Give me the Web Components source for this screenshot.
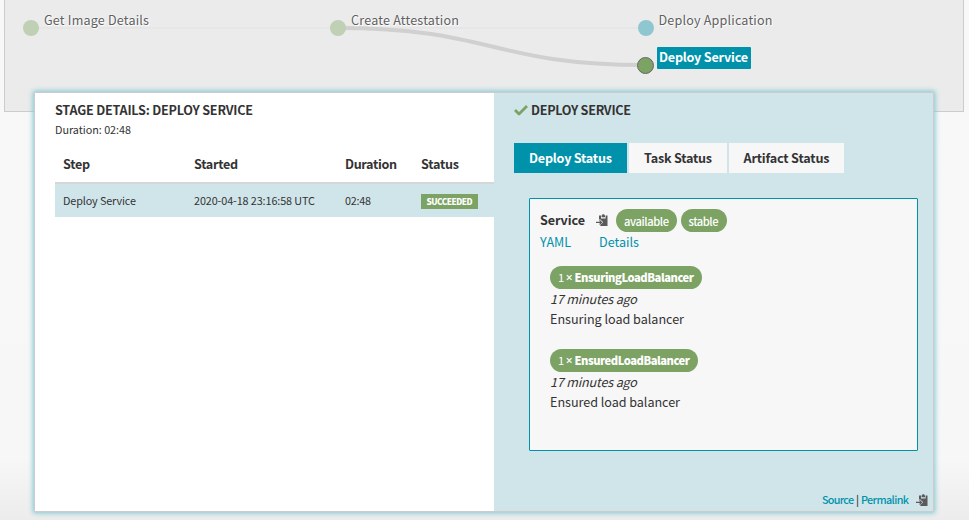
<!DOCTYPE html>
<html lang="en">
<head>
<meta charset="utf-8">
<title>Pipeline execution</title>
<style>
html{height:100%}
body{margin:0;height:520px;overflow:hidden;background:linear-gradient(#f8f8f8 0,#f7f7f7 460px,#ececec 520px);font-family:"Noto Sans CJK SC","Noto Sans",sans-serif;font-size:12.6px;line-height:20px;color:#333}
</style>
</head>
<body>
<execution-view></execution-view>
<script>
const define = (name, html, setup) => {
  const t = document.createElement('template');
  t.innerHTML = html;
  customElements.define(name, class extends HTMLElement {
    constructor() {
      super();
      this.attachShadow({mode: 'open'}).append(t.content.cloneNode(true));
    }
    connectedCallback() { if (setup) setup(this, this.shadowRoot); }
  });
};

/* A single line of text tracked to a given width. */
define('fit-text', `<style>:host{display:inline-block;white-space:nowrap;flex:none}span{display:inline-block}</style><span><slot></slot></span>`, (el, root) => {
  const w = +el.getAttribute('w'), span = root.querySelector('span');
  el.style.width = w + 'px';
  requestAnimationFrame(() => {
    const natural = span.getBoundingClientRect().width;
    span.style.letterSpacing = (w - natural) / Math.max(1, el.textContent.length - 1) + 'px';
  });
});

define('clip-icon', `<style>:host{display:inline-block;width:12px;height:13px;flex:none}svg{display:block}</style>
<svg width="12" height="13" viewBox="0 0 12 13"><path fill="#5a5a5a" d="M3 1.6H5V4.4H9.6V1.6H11.5V12H4.3V10.8L7.2 8.3 4.3 5.6H3Z"/><path fill="#5a5a5a" d="M5.6 1.2H6.3V.3H8.3V1.2H9V3.3H5.6Z"/><path fill="none" stroke="#5a5a5a" stroke-width="1.1" d="M0 8.4H5.3M3.5 6.4 5.6 8.4 3.5 10.4"/></svg>`);

define('check-icon', `<style>:host{display:inline-block;width:14px;height:12px;flex:none}svg{display:block}</style>
<svg width="14" height="12" viewBox="0 0 14 12"><path fill="none" stroke="#7ba363" stroke-width="2.8" stroke-linejoin="round" d="M1 6 5 10 13 2"/></svg>`);

define('status-pill', `<style>:host{display:inline-flex;box-sizing:border-box;height:23px;border-radius:11.5px;background:#7da364;color:#fff;font-size:11.2px;font-weight:500;line-height:23px;padding:0 8px;white-space:pre;align-items:center}</style><slot></slot>`);

define('tab-item', `<style>:host{display:flex;box-sizing:border-box;height:30px;justify-content:center;align-items:center;background:#f7f7f7;color:#333;font-weight:700}:host([active]){background:#0092ab;color:#fff}</style><slot></slot>`);

define('stage-node', `<style>
:host{position:absolute;display:block;width:16px;height:16px}
i{display:block;box-sizing:border-box;width:16px;height:16px;border-radius:50%;background:var(--fill)}
div{position:absolute;left:21px;top:-10px;height:20px;color:#606060;text-shadow:0 0 2px #fff,1px 1px 1px #fff}
:host([active]) i{width:17px;height:17px;border:1px solid #666}
:host([active]) div{left:19.5px;top:-9.5px;height:22px;box-sizing:border-box;padding:0 3px 0 2.5px;background:#0092ab;color:#fff;border-radius:1px;font-weight:700;text-shadow:none}
</style><i></i><div><slot></slot></div>`);

define('stage-graph', `<style>
:host{display:block;position:relative;box-sizing:border-box;width:960px;height:112px;margin-left:4px;background:#ebebeb;border:1px solid #ccc;border-top:0}
svg{position:absolute;left:-1px;top:0}
</style>
<svg width="959" height="111" viewBox="4 0 959 111" fill="none"><path d="M31 28H645" stroke="#e4e4e4" stroke-width="1.5"/><path d="M338 28C492 28 492 65 645 65" stroke="#d0d0d0" stroke-width="4"/></svg>
<stage-node style="left:18px;top:20px;--fill:#bfd0b5"><fit-text w="105">Get Image Details</fit-text></stage-node>
<stage-node style="left:325px;top:20px;--fill:#bfd0b5"><fit-text w="108">Create Attestation</fit-text></stage-node>
<stage-node style="left:632.5px;top:20px;--fill:#8fc7d1"><fit-text w="114">Deploy Application</fit-text></stage-node>
<stage-node active style="left:632px;top:56.5px;--fill:#7ba363"><fit-text w="89">Deploy Service</fit-text></stage-node>`);

define('step-table', `<style>
:host{display:block;margin-top:5px}
.row{display:grid;grid-template-columns:131px 151px 76px 1fr;padding-left:8px;align-items:center}
.head{height:37px;border-bottom:2px solid #d5d7d7;font-weight:700;color:#333}
.body{height:33px;line-height:18px;background:#d0e5ea;font-size:10.8px}
.tag{display:flex;justify-content:center;width:57px;height:15px;line-height:15px;margin-top:2px;background:#7da364;color:#fff;font-size:8.3px;font-weight:900}
.body>fit-text{margin-bottom:1px}
</style>
<div class="row head"><fit-text w="27">Step</fit-text><fit-text w="44">Started</fit-text><fit-text w="52">Duration</fit-text><fit-text w="38">Status</fit-text></div>
<div class="row body"><fit-text w="73">Deploy Service</fit-text><fit-text w="121">2020-04-18 23:16:58 UTC</fit-text><fit-text w="26">02:48</fit-text><span class="tag"><fit-text w="46">SUCCEEDED</fit-text></span></div>`);

define('event-item', `<style>:host{display:flex;flex-direction:column;align-items:flex-start}.ago{font-style:italic}</style>
<slot name="pill"></slot><div class="ago"><fit-text w="87">17 minutes ago</fit-text></div><slot></slot>`);

define('service-card', `<style>
:host{display:block;box-sizing:border-box;width:389px;height:253px;margin:25px 0 0 15px;border:1px solid #0092ab;border-radius:1px;background:#f7f7f7;padding:10px}
.top{display:flex;height:23px;align-items:center}
.top b{margin-bottom:2px}
.top clip-icon{margin:0 8px 0 11px}
.top status-pill{margin-right:4px;line-height:24px}
.links{display:flex;gap:28px;height:20px;color:#0092ab}
.events{display:flex;flex-direction:column;gap:20px;padding:14px 0 0 10px}
.events b{font-weight:900;margin-left:2.5px}
.count{display:inline-flex;gap:1.5px;width:14px;font-weight:400}
.count span{font-family:"Noto Sans",sans-serif;font-weight:500;font-size:12px}
</style>
<div class="top"><b><fit-text w="45">Service</fit-text></b><clip-icon></clip-icon><status-pill style="width:60.5px"><fit-text w="45">available</fit-text></status-pill><status-pill style="width:46px"><fit-text w="30">stable</fit-text></status-pill></div>
<div class="links"><fit-text w="31">YAML</fit-text><fit-text w="40">Details</fit-text></div>
<div class="events">
<event-item><status-pill slot="pill" style="width:152px"><div class="count">1<span>×</span></div><b><fit-text w="119.5">EnsuringLoadBalancer</fit-text></b></status-pill><fit-text w="134">Ensuring load balancer</fit-text></event-item>
<event-item><status-pill slot="pill" style="width:148px"><div class="count">1<span>×</span></div><b><fit-text w="115.5">EnsuredLoadBalancer</fit-text></b></status-pill><fit-text w="130">Ensured load balancer</fit-text></event-item>
</div>`);

define('stage-popover', `<style>
:host{display:flex;position:relative;box-sizing:border-box;width:900px;height:420px;margin:-20px 0 0 34px;border:1px solid #c9cdce;box-shadow:0 0 5px 1px #7fc4d0}
.left{width:459px;box-sizing:border-box;padding:7px 0 0 20px;background:#fff}
.right{flex:1;display:flex;flex-direction:column;padding:7px 0 0 20px;background:#d0e5ea}
h2{margin:0;font-size:12.6px;line-height:20px;height:20px;font-weight:700;display:flex;align-items:center;gap:3px}
.dur{height:20px;line-height:18px;font-size:10.8px}
.tabs{display:flex;gap:2px;margin-top:23px}
.foot{display:flex;margin:auto 5px 1px auto;height:20px;line-height:18px;font-size:10.8px;color:#0092ab;font-weight:500;align-items:center}
.foot>fit-text,.foot>span{margin-bottom:2px}
.foot>span{width:7px;text-align:center;color:#333}
.foot clip-icon{margin-left:7px}
</style>
<div class="left"><h2><fit-text w="198">STAGE DETAILS: DEPLOY SERVICE</fit-text></h2><div class="dur"><fit-text w="76">Duration: 02:48</fit-text></div><step-table></step-table></div>
<div class="right"><h2><check-icon></check-icon><fit-text w="100">DEPLOY SERVICE</fit-text></h2>
<div class="tabs"><tab-item active style="width:113px"><fit-text w="83">Deploy Status</fit-text></tab-item><tab-item style="width:98px"><fit-text w="68">Task Status</fit-text></tab-item><tab-item style="width:115px"><fit-text w="86">Artifact Status</fit-text></tab-item></div>
<service-card></service-card>
<div class="foot"><fit-text w="32">Source</fit-text><span>|</span><fit-text w="48">Permalink</fit-text><clip-icon></clip-icon></div></div>`);

define('execution-view', `<style>:host{display:block}</style><stage-graph></stage-graph><stage-popover></stage-popover>`);
</script>
</body>
</html>
